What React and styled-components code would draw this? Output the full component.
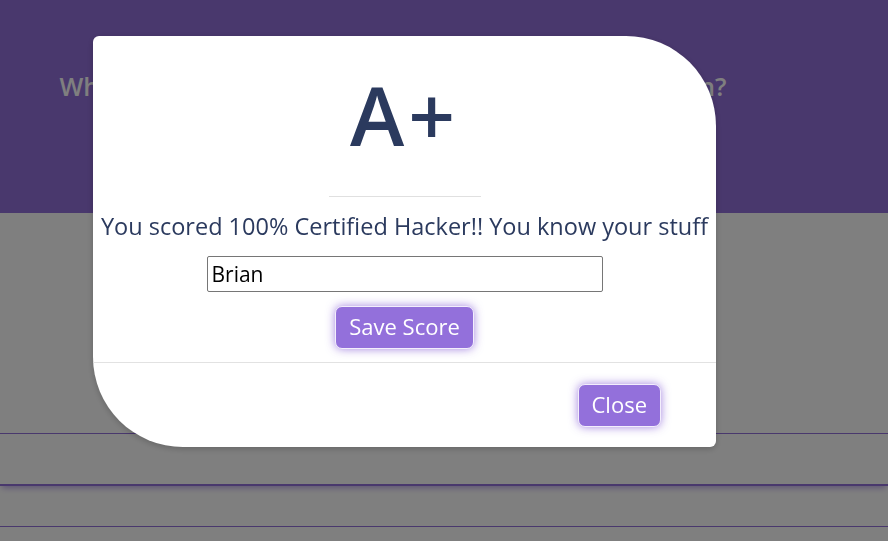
import React from 'react'
import styled, { createGlobalStyle } from 'styled-components'

const GlobalStyle = createGlobalStyle`
    html, body {
        margin: 0;
        padding: 0;
        background: #ffffff;
        font-family: "Open Sans", "Noto Sans", sans-serif;
        overflow: hidden;
    }
`

function App() {
    return (
        <>
            <GlobalStyle />
            <Page>
                <Header>
                    <Question>What does the acronym HTML stand for in web design?</Question>
                </Header>
                <Options>
                    <Option $height={220} />
                    <Option $height={50} $strong />
                    <Option $height={40} />
                    <Option $height={14} $bare />
                </Options>
            </Page>

            <Overlay>
                <Modal>
                    <ModalBody>
                        <Grade>A+</Grade>
                        <Rule />
                        <Message>You scored 100% Certified Hacker!! You know your stuff</Message>
                        <NameInput defaultValue="Brian" />
                        <Button>Save Score</Button>
                    </ModalBody>
                    <ModalFooter>
                        <Button $flush>Close</Button>
                    </ModalFooter>
                </Modal>
            </Overlay>
        </>
    )
}

const Page = styled.div`
    width: 100%;
    height: 541px;
`

const Header = styled.header`
    height: 213px;
    background: #9370db;
    display: flex;
    justify-content: center;
    padding-top: 68px;
    box-sizing: border-box;
`

const Question = styled.h2`
    margin: 0;
    height: 36px;
    color: #ffffff;
    font-size: 25.2px;
    font-weight: 600;
    line-height: 36px;
    transform: translateX(-51px);
`

const Options = styled.div`
    display: flex;
    flex-direction: column;
`

const Option = styled.div`
    height: ${p => p.$height}px;
    border-bottom: ${p => p.$bare ? 'none' : p.$strong ? '2px solid #9370db' : '1px solid #9370db'};
    box-shadow: ${p => p.$strong ? '0 4px 6px -2px rgba(147, 112, 219, 0.6)' : 'none'};
`

const Overlay = styled.div`
    position: fixed;
    inset: 0;
    background: rgba(0, 0, 0, 0.5);
    display: flex;
    align-items: flex-start;
    padding: 36px 0 0 93px;
`

const Modal = styled.div`
    width: 623px;
    height: 411px;
    background: #ffffff;
    border-radius: 6px 90px 6px 90px;
    box-shadow: 0 2px 6px rgba(0, 0, 0, 0.2);
    display: flex;
    flex-direction: column;
    overflow: hidden;
`

const ModalBody = styled.div`
    display: flex;
    flex-direction: column;
    align-items: center;
    padding: 38px 0 13px;
    border-bottom: 1px solid #e2e2e2;
`

const Grade = styled.h1`
    margin: 0;
    font-size: 82px;
    line-height: 80px;
    font-weight: 600;
    letter-spacing: 4px;
    color: #2b3a5e;
`

const Rule = styled.hr`
    width: 152px;
    margin: 42px 0 0;
    border: none;
    border-top: 1px solid #e0e0e0;
`

const Message = styled.p`
    margin: 14px 0 0;
    font-size: 23.5px;
    line-height: 30px;
    color: #2b3a5e;
    white-space: nowrap;
`

const NameInput = styled.input`
    margin-top: 15px;
    width: 396px;
    height: 36px;
    box-sizing: border-box;
    border: 1px solid #767676;
    border-radius: 2px;
    padding: 0 4px;
    font-family: inherit;
    font-size: 21px;
    color: #000000;
    outline: none;
`

const Button = styled.button`
    margin-top: ${p => p.$flush ? 0 : 14}px;
    height: 43px;
    padding: 0 13px 3px;
    background: #9370db;
    color: #ffffff;
    border: 1px solid #f3eefc;
    border-radius: 7px;
    box-shadow: 0 0 10px rgba(147, 112, 219, 0.85);
    font-family: inherit;
    font-size: 22px;
    cursor: pointer;
`

const ModalFooter = styled.div`
    display: flex;
    justify-content: flex-end;
    padding: 21px 55px 0 0;
`

export default App
